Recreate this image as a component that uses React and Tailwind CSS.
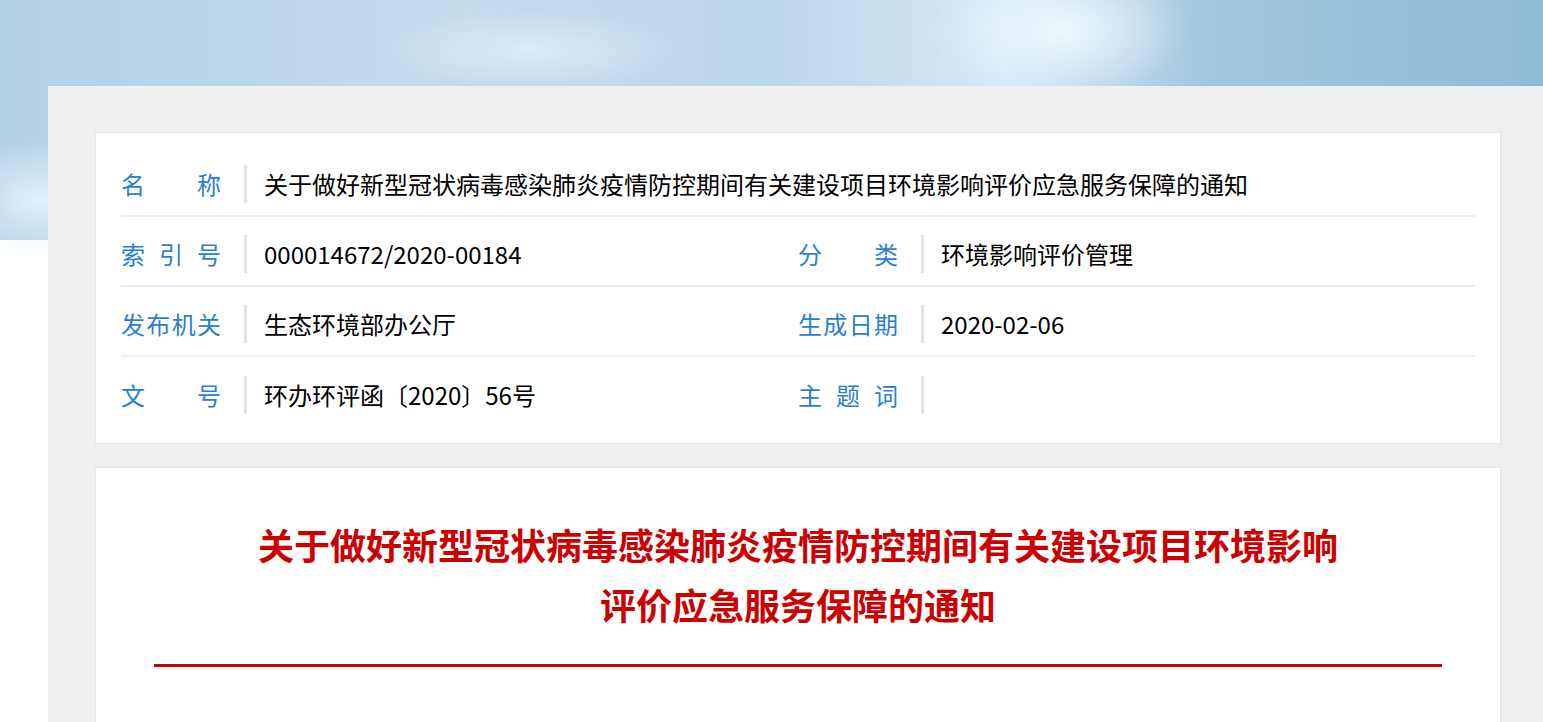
const FONT = { fontFamily: '"Microsoft YaHei", "Noto Sans CJK SC", "Noto Sans", sans-serif' }

const ROWS = [
  [{ label: '名称', value: '关于做好新型冠状病毒感染肺炎疫情防控期间有关建设项目环境影响评价应急服务保障的通知', wide: true }],
  [
    { label: '索引号', value: '000014672/2020-00184' },
    { label: '分类', value: '环境影响评价管理' },
  ],
  [
    { label: '发布机关', value: '生态环境部办公厅' },
    { label: '生成日期', value: '2020-02-06' },
  ],
  [
    { label: '文号', value: '环办环评函〔2020〕56号' },
    { label: '主题词', value: '' },
  ],
]

function Field({ label, value, wide }) {
  return (
    <div className={`flex items-center ${wide ? 'col-span-2' : ''}`}>
      <span className="w-[100px] shrink-0 text-[24px] text-[#2a7fd0] [text-align-last:justify] leading-none">
        {label}
      </span>
      <span className="ml-[23px] mr-[17px] w-[3px] h-[38px] bg-[#e2e2e2] shrink-0" />
      <span className="text-[24px] text-black leading-none whitespace-nowrap">{value}</span>
    </div>
  )
}

export default function App() {
  return (
    <div className="relative min-h-[722px] bg-white overflow-hidden" style={FONT}>
      {/* sky banner */}
      <div className="absolute inset-x-0 top-0 h-[240px] bg-[linear-gradient(90deg,#b3d1e6_0%,#c4dbec_30%,#bcd6ea_50%,#d6e9f5_65%,#a3c7df_78%,#8fbad6_100%)]">
        <div className="absolute left-[930px] top-[-40px] w-[260px] h-[140px] rounded-full bg-[radial-gradient(closest-side,#eef7fc,rgba(238,247,252,0))]" />
        <div className="absolute left-[380px] top-[10px] w-[300px] h-[80px] rounded-full bg-[radial-gradient(closest-side,rgba(226,240,250,0.8),rgba(226,240,250,0))]" />
        <div className="absolute left-[-60px] top-[140px] w-[200px] h-[120px] rounded-full bg-[radial-gradient(closest-side,rgba(230,243,252,0.9),rgba(230,243,252,0))]" />
      </div>

      <div className="relative ml-[48px] mt-[86px] bg-[#efefef] pt-[46px] pl-[47px] pr-[42px] pb-10 min-h-[636px]">
        <div className="bg-white border border-[#e6e6e6] px-[25px] pt-[14px] pb-[16px] w-[1406px]">
          {ROWS.map((row, i) => (
            <div
              key={i}
              className={`grid grid-cols-2 h-[70px] items-center pt-[6px] ${i < ROWS.length - 1 ? 'border-b-2 border-[#eeeeee]' : ''}`}
            >
              {row.map(f => <Field key={f.label} {...f} />)}
            </div>
          ))}
        </div>

        <div className="mt-[23px] bg-white border border-[#e6e6e6] px-[58px] pt-[46px] pb-16 w-[1406px]">
          <h1 className="mx-auto max-w-[1090px] text-center text-[36px] leading-[60px] font-bold text-[#cc0000]">
            关于做好新型冠状病毒感染肺炎疫情防控期间有关建设项目环境影响评价应急服务保障的通知
          </h1>
          <div className="mt-[30px] h-[3px] bg-[#cc0000]" />
        </div>
      </div>
    </div>
  )
}
